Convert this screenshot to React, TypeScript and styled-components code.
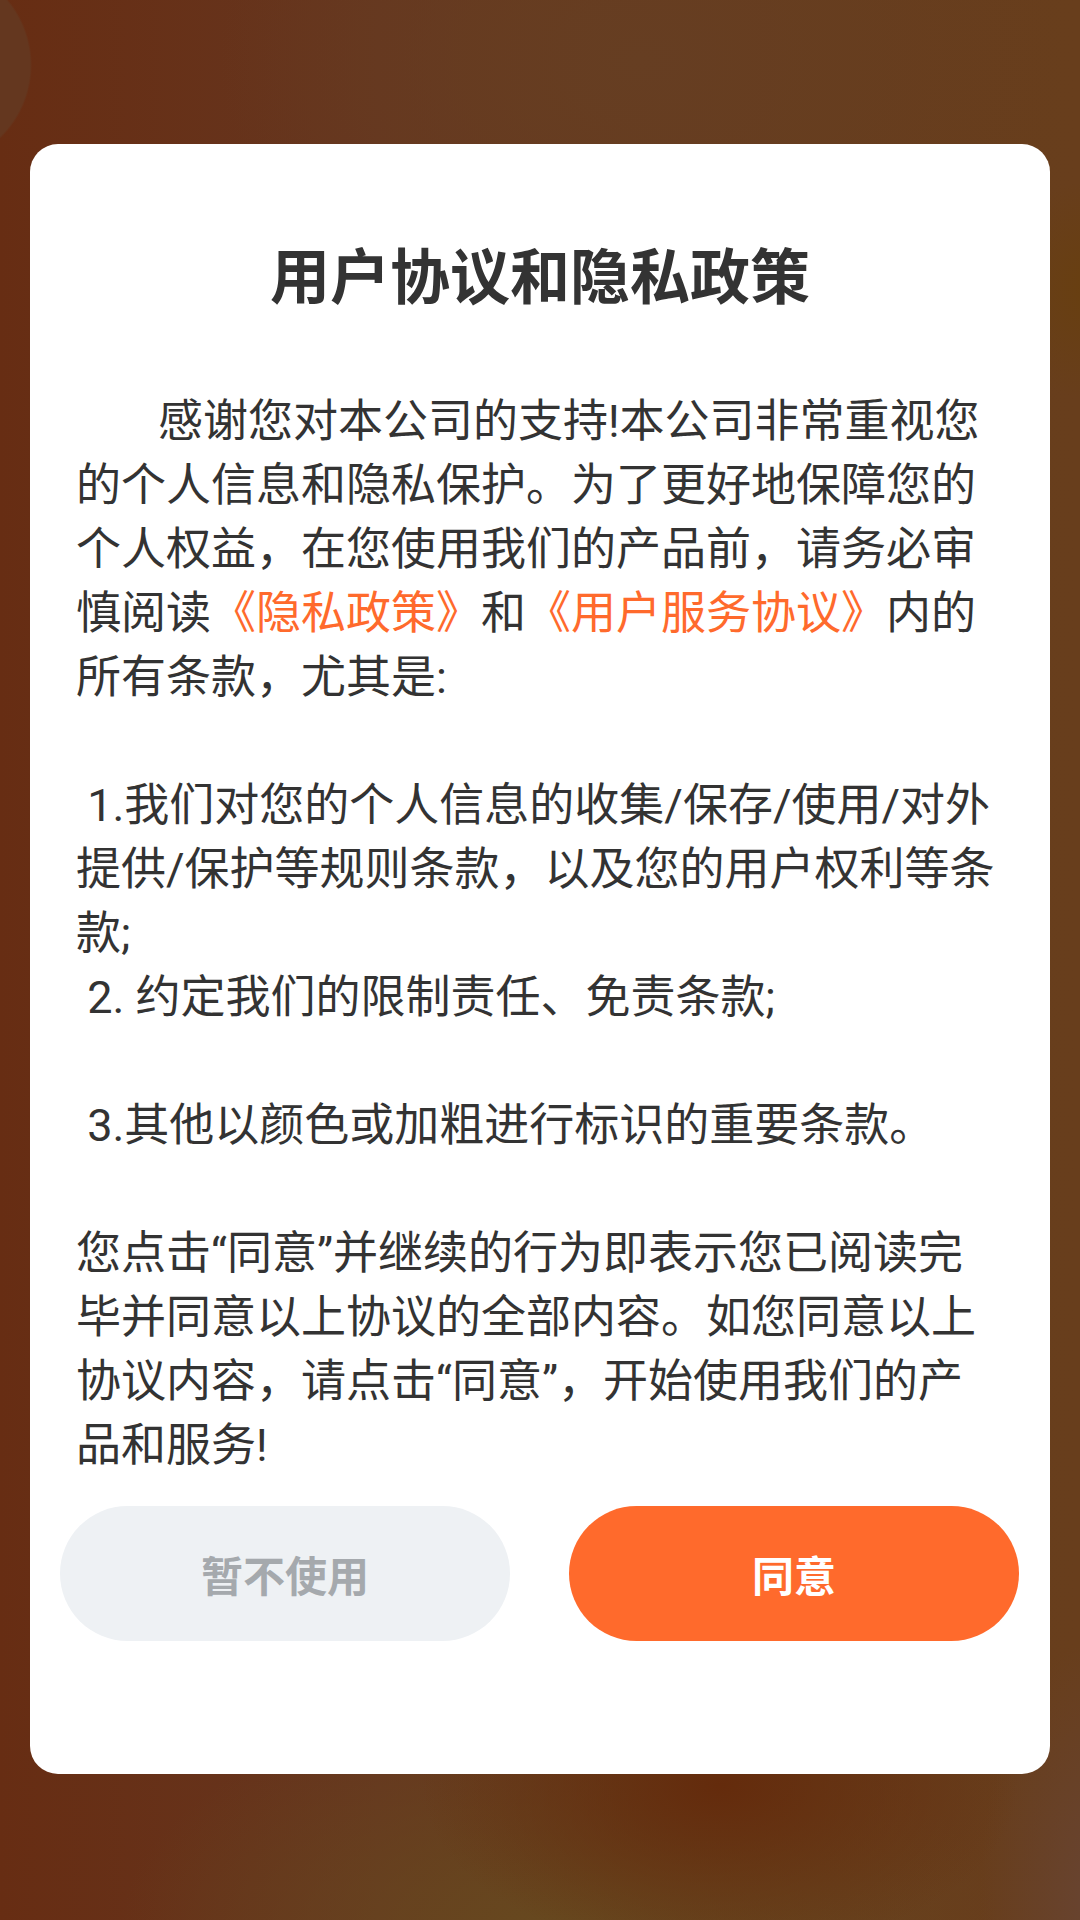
import React from "react";
import styled, { createGlobalStyle } from "styled-components";

const GlobalStyle = createGlobalStyle`
  html, body {
    margin: 0;
    padding: 0;
  }
  body {
    width: 1080px;
    min-height: 1920px;
    font-family: Roboto, "Noto Sans CJK SC", sans-serif;
  }
`;

const Page = styled.div`
  width: 1080px;
  height: 1920px;
  box-sizing: border-box;
  padding-top: 144px;
  display: flex;
  justify-content: center;
  align-items: flex-start;
  background:
    radial-gradient(circle at -70px 65px, #64371f 0 100px, transparent 102px),
    radial-gradient(ellipse 90px 110px at 1090px 290px, #683f10, transparent),
    radial-gradient(ellipse 300px 170px at 720px 1785px, #642b0c, transparent),
    radial-gradient(ellipse 440px 230px at 560px 1930px, #67491f, transparent),
    radial-gradient(ellipse 120px 260px at 1100px 1900px, #684432, transparent),
    radial-gradient(ellipse 420px 300px at 640px 60px, #663e22, transparent),
    linear-gradient(to right, #672d13 0%, #66361f 35%, #673d1c 75%, #683e1c 100%);
`;

const Card = styled.div`
  width: 1020px;
  height: 1630px;
  box-sizing: border-box;
  background: #ffffff;
  border-radius: 28px;
  display: flex;
  flex-direction: column;
  padding-top: 90px;
`;

const Title = styled.h1`
  margin: 0;
  font-family: "Noto Sans CJK SC", sans-serif;
  font-size: 60px;
  line-height: 77px;
  font-weight: 700;
  color: #333333;
  text-align: center;
`;

const Body = styled.div`
  margin: 79px 0 0 46px;
  width: 940px;
  font-size: 45px;
  line-height: 64px;
  color: #333333;
  white-space: pre-wrap;
  text-indent: 82px;
`;

const Link = styled.span`
  color: #ff6a2c;
`;

const Actions = styled.div`
  margin-top: 28px;
  padding: 0 31px 0 30px;
  display: flex;
  justify-content: space-between;
`;

const Button = styled.button<{ $primary?: boolean }>`
  width: 450px;
  height: 135px;
  border: none;
  border-radius: 68px;
  background: ${(p) => (p.$primary ? "#ff6a2c" : "#eef1f4")};
  color: ${(p) => (p.$primary ? "#ffffff" : "#a5a9ad")};
  font-family: "Noto Sans CJK SC", sans-serif;
  font-size: 42px;
  font-weight: 700;
  padding: 0;
  cursor: pointer;
`;

export default function App() {
  return (
    <>
      <GlobalStyle />
      <Page>
        <Card>
          <Title>用户协议和隐私政策</Title>
          <Body>
            {"感谢您对本公司的支持!本公司非常重视您\n"}
            {"的个人信息和隐私保护。为了更好地保障您的\n"}
            {"个人权益，在您使用我们的产品前，请务必审\n"}
            {"慎阅读"}
            <Link>《隐私政策》</Link>
            {"和"}
            <Link>《用户服务协议》</Link>
            {"内的\n"}
            {"所有条款，尤其是:\n"}
            {"\n"}
            {" 1.我们对您的个人信息的收集/保存/使用/对外\n"}
            {"提供/保护等规则条款，以及您的用户权利等条\n"}
            {"款;\n"}
            {" 2. 约定我们的限制责任、免责条款;\n"}
            {"\n"}
            {" 3.其他以颜色或加粗进行标识的重要条款。\n"}
            {"\n"}
            {"您点击“同意”并继续的行为即表示您已阅读完\n"}
            {"毕并同意以上协议的全部内容。如您同意以上\n"}
            {"协议内容，请点击“同意”，开始使用我们的产\n"}
            {"品和服务!"}
          </Body>
          <Actions>
            <Button>暂不使用</Button>
            <Button $primary>同意</Button>
          </Actions>
        </Card>
      </Page>
    </>
  );
}
